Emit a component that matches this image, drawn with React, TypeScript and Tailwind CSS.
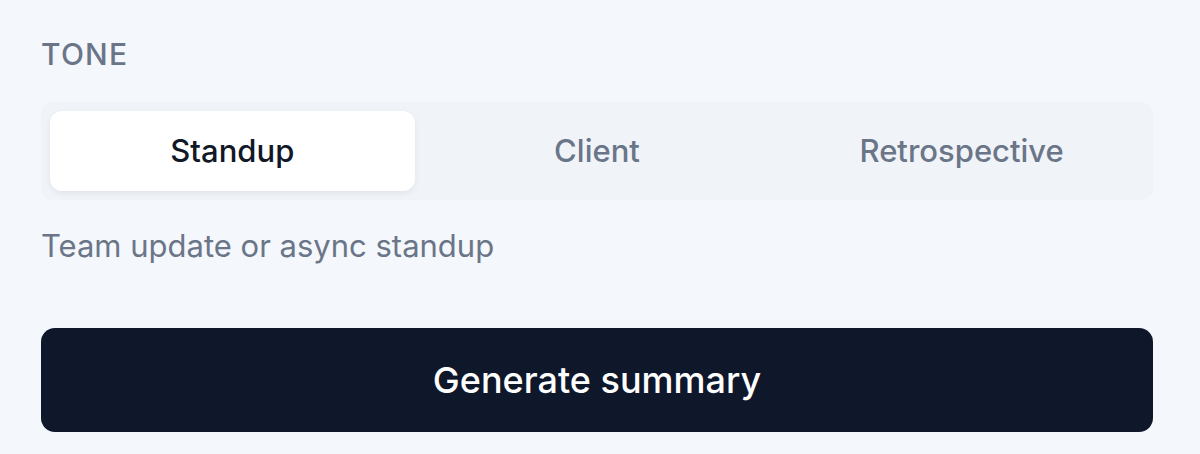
import { useState } from "react";

const tones = [
  { id: "standup", label: "Standup", hint: "Team update or async standup" },
  { id: "client", label: "Client", hint: "Polished update for a client" },
  { id: "retro", label: "Retrospective", hint: "What went well and what to improve" },
];

export default function App() {
  const [tone, setTone] = useState("standup");
  const current = tones.find((t) => t.id === tone)!;

  return (
    <div
      className="min-h-[454px] w-full bg-[#f4f7fc] pl-[41px] pr-[47px] pt-[36px]"
      style={{ fontFamily: "Inter, 'Noto Sans', sans-serif" }}
    >
      <div className="text-[30px] font-medium uppercase leading-[36px] tracking-[0.04em] text-[#6b7588]">
        Tone
      </div>

      <div className="mt-[30px] grid grid-cols-3 rounded-[12px] bg-[#f0f3f8] p-[9px]">
        {tones.map((t) => (
          <button
            key={t.id}
            onClick={() => setTone(t.id)}
            className={
              t.id === tone
                ? "h-[80px] rounded-[12px] bg-white text-[31px] font-medium text-[#111827] shadow-[0_2px_6px_rgba(15,23,42,0.07)]"
                : "h-[80px] rounded-[12px] text-[31px] font-medium text-[#6b7588]"
            }
          >
            {t.label}
          </button>
        ))}
      </div>

      <p className="mt-[27px] text-[31px] leading-[38px] text-[#6b7588]">{current.hint}</p>

      <button className="mt-[63px] h-[104px] w-full rounded-[14px] bg-[#0f172a] text-[36px] font-medium text-white">
        Generate summary
      </button>
    </div>
  );
}
